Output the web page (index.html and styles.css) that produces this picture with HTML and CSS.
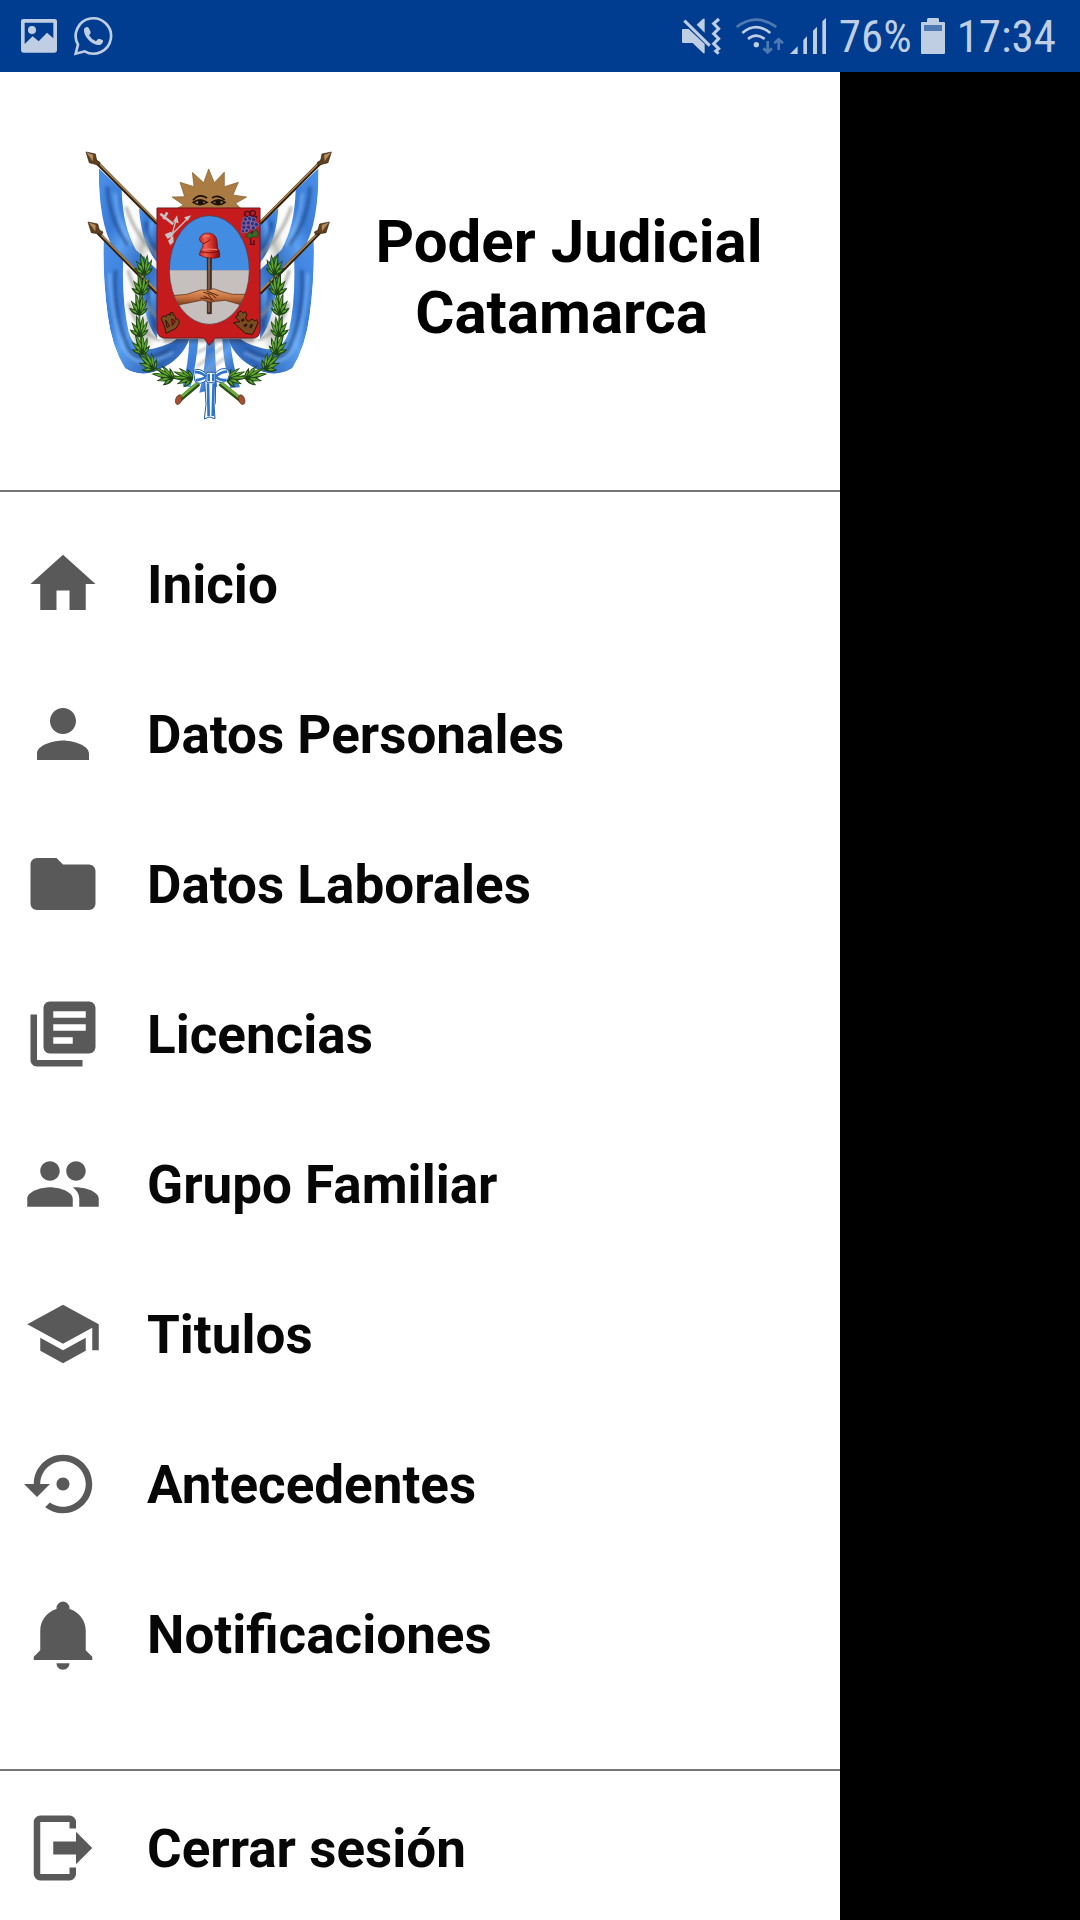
FILE: index.html
```html
<!DOCTYPE html>
<html lang="es">
<head>
<meta charset="utf-8">
<meta name="viewport" content="width=device-width, initial-scale=1">
<title>Poder Judicial Catamarca</title>
<link rel="stylesheet" href="styles.css">
</head>
<body>
<div class="status">
  <div class="status-group status-left">
    <svg width="38" height="40" viewBox="60 48 114 120" aria-hidden="true"><path fill-rule="evenodd" d="M70 57H164Q171 57 171 64V151Q171 158 164 158H70Q63 158 63 151V64Q63 57 70 57ZM74 68V132L98 109L116 124L141 98L160 115V68Z"/><circle cx="96" cy="90" r="12"/></svg>
    <svg width="40" height="40" viewBox="218 48 120 120" aria-hidden="true"><path class="line" stroke-width="8" stroke-linejoin="miter" d="M226 161L233 134A53 53 0 1 1 253 154Z"/><path d="M251 86Q258 78 265 83L271 96Q272 101 266 106Q274 119 287 124L293 117Q297 115 308 121Q309 130 301 134Q287 139 267 122Q249 104 251 86Z"/></svg>
  </div>
  <div class="status-group">
    <svg width="51" height="40" viewBox="60 48 153 120" aria-hidden="true"><path d="M69 87H86L134 132V160H130L98 129H69Q66 129 66 126V90Q66 87 69 87ZM110 74L129 56H134V98Z"/><path class="gap" d="M80 53L158 129" stroke-width="6"/><path class="line" stroke-width="9" d="M73 62L149 137"/><path class="line" stroke-width="9" d="M177 57L161 71L176 86L161 101L176 116L161 131L176 146L167 153L176 161"/></svg>
    <svg width="50" height="40" viewBox="225 48 150 120" aria-hidden="true"><g class="line" stroke-width="8"><path class="dim" d="M230 81Q288 37 349 81"/><path d="M247 99Q288 64 331 99"/><path d="M264 117Q288 97 314 117"/></g><circle cx="289" cy="134" r="8"/><g class="line dim" stroke-width="8"><path d="M323 123V156M310 145L323 157L336 145M356 150V118M343 130L356 118L369 130"/></g></svg>
    <svg width="46" height="40" viewBox="387 48 138 120" aria-hidden="true"><path d="M390 162L413 139V162ZM430 162V120L441 109V162ZM459 162V92L471 80V162ZM487 162V64L498 54V162Z"/></svg>
    <span>76%</span>
    <svg width="37" height="40" viewBox="768 48 111 120" aria-hidden="true"><path d="M783 69Q783 66 786 66H801V57L804 54H834L837 57V66H852Q855 66 855 69V159Q855 162 852 162H786Q783 162 783 159Z"/><path class="level" d="M792 75H846V93H792Z"/></svg>
    <span>17:34</span>
  </div>
</div>
<div class="screen">
  <aside class="drawer">
    <header class="brand">
      <svg class="crest" viewBox="0 0 840 870" role="img" aria-label="Escudo de Catamarca">
        <defs>
          <linearGradient id="cloth" x1="0" y1="0" x2="1" y2="1" spreadMethod="reflect"><stop offset="0" stop-color="#4b91ea"/><stop offset=".35" stop-color="#3a7cd8"/><stop offset=".5" stop-color="#5a9ff0"/><stop offset=".8" stop-color="#2c62b4"/><stop offset="1" stop-color="#4a8ce2"/></linearGradient>
          <linearGradient id="linen" x1="0" y1="0" x2="1" y2="1"><stop offset="0" stop-color="#fff"/><stop offset=".45" stop-color="#fafafa"/><stop offset=".6" stop-color="#c4c4c0"/><stop offset=".75" stop-color="#fff"/><stop offset="1" stop-color="#e2e2e2"/></linearGradient>
          <linearGradient id="hat" x1="0" y1="0" x2="1" y2="0"><stop offset="0" stop-color="#c52622"/><stop offset=".3" stop-color="#f05a48"/><stop offset=".7" stop-color="#c3211e"/><stop offset="1" stop-color="#6d0e10"/></linearGradient>
          <linearGradient id="skin" x1="0" y1="0" x2="0" y2="1"><stop offset="0" stop-color="#e69d68"/><stop offset=".5" stop-color="#c97540"/><stop offset="1" stop-color="#7d3c1c"/></linearGradient>
          <filter id="soft" x="-20%" y="-20%" width="140%" height="140%"><feGaussianBlur stdDeviation="5"/></filter>
          <clipPath id="oval"><ellipse cx="418" cy="390" rx="120" ry="163"/></clipPath>
          <clipPath id="flagShape"><path d="M86 84L262 250V597H358Q335 660 265 690Q215 715 165 685Q125 620 113 525Q96 400 101 297Q86 190 86 84Z"/></clipPath>
          <g id="sprig">
            <path fill="#1d4414" d="M-3 31Q-22 26-29 8L-15 12L-24-14L-10-3L-10-36Q0-24 2-8L11-32Q16-16 13-2L25-18Q25 0 16 12L28 8Q20 28 4 32Z"/>
            <path fill="#5fa52f" d="M-5 25Q-17 22-23 12L-9 17ZM-3 20Q-16 8-20-8L-5 6ZM0 15Q-9-10-7-27Q0-16 2 1ZM4 17Q4-10 11-25Q13-10 10 5ZM6 22Q10 2 22-12Q21 4 12 16ZM6 28Q12 16 22 13Q17 25 6 28Z"/>
          </g>
          <g id="flags">
            <path fill="#fff" d="M86 84L262 250V597H358Q335 660 265 690Q215 715 165 685Q125 620 113 525Q96 400 101 297Q86 190 86 84Z"/>
            <g clip-path="url(#flagShape)">
              <path fill="url(#linen)" d="M155 150L207 205Q213 280 262 352V420L210 388Q166 300 155 150Z"/>
              <path fill="url(#cloth)" d="M86 84L155 150Q158 260 198 330L262 390V452L130 325Q86 250 86 84Z"/>
              <path fill="url(#cloth)" d="M207 205L262 252V368Q214 310 207 205Z"/>
              <path fill="url(#linen)" d="M160 350L262 452V600H325Q270 650 210 635Q155 560 160 350Z"/>
              <path fill="url(#cloth)" d="M101 297L160 350Q154 480 176 575Q195 640 255 625Q300 613 320 597H358Q345 660 265 690Q215 715 165 685Q125 620 113 525Q98 410 101 297Z"/>
              <path fill="url(#cloth)" d="M209 402L262 458V597Q217 535 209 402Z"/>
              <g fill="none" filter="url(#soft)"><path stroke="#1b4686" opacity=".6" stroke-width="12" d="M112 140Q116 240 176 315M137 390Q126 520 180 635Q205 675 300 630M228 245Q230 300 262 335M233 440Q238 530 262 570"/><path stroke="#8cc4ff" opacity=".6" stroke-width="8" d="M135 160Q140 245 184 315M118 400Q125 550 160 625Q205 700 310 637"/><path stroke="#8c8c86" opacity=".7" stroke-width="9" d="M168 200Q195 285 260 345M174 390Q195 470 262 530M176 490Q205 580 270 600"/></g>
            </g>
            <g fill="none"><path stroke="#2e1f10" stroke-width="11" d="M75 62L262 250M84 278L262 460"/><path stroke="#b08750" stroke-width="5" d="M76 60L262 246M84 275L262 455"/></g>
            <g fill="#60411f" stroke="#302010" stroke-width="2"><path d="M48 36L76 42L80 62L90 67L87 76L76 73L58 68Z"/><path d="M54 246L83 252L88 270L99 276L95 285L83 281L64 278Z"/></g><path fill="#b48b5b" d="M49 37L70 45L68 64ZM55 247L77 255L76 274Z"/>
          </g>
        </defs>
        <path fill="#fff" d="M358 597H480L505 742L450 735L400 765L340 740Z"/>
        <path fill="url(#cloth)" d="M358 597H385Q380 665 362 742L338 738Q355 675 358 597ZM410 600H433L441 740L421 750L388 758Q407 680 410 600ZM457 597H480Q488 680 510 742L481 744Q460 670 457 597Z"/>
        <path fill="none" stroke="#8d8d87" stroke-width="7" opacity=".6" filter="url(#soft)" d="M380 680L460 620M400 700L470 650M375 640L440 610"/>
        <use href="#flags"/><use href="#flags" transform="translate(832 0) scale(-1 1)"/>
        <path fill="#aa7b43" stroke="#87592a" stroke-width="2" d="M322 205L340 195L306 171L344 170L330 127L372 140L367 97L401 128L416 87L433 128L463 96L463 140L505 127L489 165L530 171L497 190L512 205Z"/>
        <g fill="none" stroke="#1c120a" stroke-width="5"><path d="M369 181Q386 159 411 174M426 174Q444 162 464 180M370 187Q390 172 411 187Q390 201 370 187ZM425 187Q445 172 465 187Q445 201 425 187Z"/></g><circle cx="392" cy="187" r="8" fill="#1c120a"/><circle cx="444" cy="187" r="8" fill="#1c120a"/>
        <path fill="#313131" opacity=".45" filter="url(#soft)" d="M266 580H565L550 607H283Z"/>
        <path fill="#c51b1d" stroke="#6f191c" stroke-width="3" d="M261 204H570V570Q570 594 547 594H435L418 616L402 594H284Q262 592 261 570Z"/>
        <g clip-path="url(#oval)"><path fill="#428ce2" d="M290 220H550V392H290Z"/><path fill="#c5bfbd" d="M290 391H550V560H290Z"/><path fill="#4b3024" stroke="#1e120e" stroke-width="2" d="M412 340H424V521H412Z"/><path fill="#947060" d="M415 350H419V517H415Z"/>
          <path fill="url(#skin)" stroke="#53250f" stroke-width="2" d="M295 468L350 463L391 450L416 450L431 446L456 455L488 463H545V491L512 494L466 481L437 484L418 487L397 480L355 489L318 496L295 494Z"/><path fill="none" stroke="#53250f" stroke-width="3" d="M400 457L425 463L439 475M410 453L445 467M401 468L426 480M414 463L430 483M391 474L413 476"/></g>
        <ellipse cx="418" cy="390" rx="120" ry="163" fill="none" stroke="#493943" stroke-width="2"/>
        <path fill="url(#hat)" stroke="#5f1112" stroke-width="2" d="M388 345Q390 329 398 321L399 311Q388 305 388 296Q394 279 415 279Q438 281 441 302L443 325Q450 331 449 351Q420 361 388 345Z"/><path fill="none" stroke="#ee7768" stroke-width="4" d="M398 292Q407 286 419 289M397 329Q420 326 442 329"/><path fill="none" stroke="#771412" stroke-width="3" d="M399 311Q412 308 420 298M391 335Q419 342 447 335"/>
        <g fill="none" stroke="#c6c2c4" stroke-width="8"><path d="M271 221L310 253M280 237L292 217"/><path stroke-width="4" d="M299 290L355 233M302 300L318 240"/></g><g fill="#c6c2c4"><path d="M321 226L326 250L309 245ZM364 226L352 243L342 232ZM284 283L303 275L311 284L293 297ZM294 302L310 288L311 306L301 316Z"/></g>
        <g fill="none" stroke="#480e1c" stroke-width="4"><circle cx="532" cy="222" r="8"/><circle cx="548" cy="220" r="8"/><path d="M520 233L559 230L542 292V313H552V300"/></g>
        <g fill="#343078" stroke="#9084c7" stroke-width="2"><circle cx="526" cy="238" r="7"/><circle cx="539" cy="236" r="7"/><circle cx="551" cy="239" r="7"/><circle cx="522" cy="250" r="7"/><circle cx="535" cy="249" r="7"/><circle cx="548" cy="251" r="7"/><circle cx="559" cy="254" r="7"/><circle cx="522" cy="262" r="7"/><circle cx="535" cy="262" r="7"/><circle cx="550" cy="264" r="7"/><circle cx="519" cy="273" r="6"/><circle cx="530" cy="272" r="6"/></g><path fill="#36692c" stroke="#173914" stroke-width="2" d="M527 288L539 276L546 282L558 267L565 279L562 292L548 290L539 296Z"/>
        <g fill="#7a4a20" stroke="#2b160a" stroke-width="3"><path fill-rule="evenodd" d="M284 560L274 536Q277 524 289 530Q291 519 302 526L300 519L308 517L310 526Q320 528 316 537Q330 535 327 550L318 565L288 580ZM287 540L291 562L299 558ZM305 537L307 556L316 544Z"/><path d="M496 531L506 526L503 518L513 513L520 520L526 514L531 525L526 534L534 545L546 537L554 543L560 539L564 549L548 583L526 580L491 548L510 545Z"/><path d="M514 543L522 538M522 559L531 553M541 564L546 553" stroke-width="7"/></g>
        <g fill="none" stroke="#397020" stroke-width="5"><path id="vine" d="M222 350Q211 405 209 495Q203 605 233 665Q265 704 350 714"/><use href="#vine" transform="translate(836 0) scale(-1 1)"/></g>
        <g id="laurel"><use href="#sprig" transform="translate(221 375)"/><use href="#sprig" transform="translate(213 435)"/><use href="#sprig" transform="translate(206 495)"/><use href="#sprig" transform="translate(208 560)"/><use href="#sprig" transform="translate(211 614) rotate(-12)"/><use href="#sprig" transform="translate(233 666) rotate(-35)"/><use href="#sprig" transform="translate(281 706) rotate(-68)"/><use href="#sprig" transform="translate(338 712) rotate(-78)"/></g><use href="#laurel" transform="translate(836 0) scale(-1 1)"/>
        <g fill="none" stroke-width="15"><path stroke="#254f17" d="M325 782L386 730M516 782L450 730"/><path stroke="#71ae3c" stroke-width="8" d="M325 778L386 726M516 778L450 726"/></g><g fill="#a54e31" stroke="#57301a" stroke-width="2"><ellipse cx="326" cy="779" rx="9" ry="15" transform="rotate(20 326 779)"/><ellipse cx="515" cy="779" rx="9" ry="15" transform="rotate(-20 515 779)"/></g>
        <g fill="#f8fcff" stroke="#245eac" stroke-width="3"><path d="M404 720H437L436 790L432 796L435 836L418 831L403 837L408 793Z"/><path d="M409 701Q387 681 370 692L375 724Q390 738 411 719ZM434 701Q455 678 475 689Q483 702 473 719Q455 735 434 720Z"/><rect x="408" y="697" width="29" height="31" rx="7"/></g><path fill="none" stroke="#2d74cc" stroke-width="8" d="M374 697Q390 694 409 710M377 721Q390 720 407 712M472 695Q457 694 437 709M470 719Q455 723 439 713M414 730L416 829M431 730L428 828M416 701V724M430 701V724"/>
      </svg>
      <h1 class="title">Poder Judicial<br>Catamarca&nbsp;</h1>
    </header>
    <nav class="menu">
      <a class="item" href="#inicio"><svg class="icon" viewBox="0 0 24 24"><path d="M10 20v-6h4v6h5v-8h3L12 3 2 12h3v8z"/></svg><span class="label">Inicio</span></a>
      <a class="item" href="#personales"><svg class="icon" viewBox="0 0 24 24"><path d="M12 12c2.210 0 4-1.790 4-4s-1.790-4-4-4-4 1.790-4 4 1.790 4 4 4zm0 2c-2.670 0-8 1.340-8 4v2h16v-2c0-2.660-5.330-4-8-4z"/></svg><span class="label">Datos Personales</span></a>
      <a class="item" href="#laborales"><svg class="icon" viewBox="0 0 24 24"><path d="M10 4H4c-1.100 0-1.990.900-1.990 2L2 18c0 1.100.900 2 2 2h16c1.100 0 2-.900 2-2V8c0-1.100-.900-2-2-2h-8l-2-2z"/></svg><span class="label">Datos Laborales</span></a>
      <a class="item" href="#licencias"><svg class="icon" viewBox="0 0 24 24"><path d="M4 6H2v14c0 1.100.900 2 2 2h14v-2H4V6zm16-4H8c-1.100 0-2 .900-2 2v12c0 1.100.900 2 2 2h12c1.100 0 2-.900 2-2V4c0-1.100-.900-2-2-2zm-1 9H9V9h10v2zm-4 4H9v-2h6v2zm4-8H9V5h10v2z"/></svg><span class="label">Licencias</span></a>
      <a class="item" href="#familia"><svg class="icon" viewBox="0 0 24 24"><path d="M16 11c1.660 0 2.990-1.340 2.990-3S17.660 5 16 5s-3 1.340-3 3 1.340 3 3 3zm-8 0c1.660 0 2.990-1.340 2.990-3S9.660 5 8 5 5 6.340 5 8s1.340 3 3 3zm0 2c-2.330 0-7 1.170-7 3.500V19h14v-2.500C15 14.170 10.330 13 8 13zm8 0c-.290 0-.620.020-.970.050C16.190 13.890 17 15.020 17 16.500V19h6v-2.500c0-2.330-4.670-3.500-7-3.500z"/></svg><span class="label">Grupo Familiar</span></a>
      <a class="item" href="#titulos"><svg class="icon" viewBox="0 0 24 24"><path d="M5 13.180v4L12 21l7-3.820v-4L12 17l-7-3.820zM12 3L1 9l11 6 9-4.910V17h2V9L12 3z"/></svg><span class="label">Titulos</span></a>
      <a class="item" href="#antecedentes"><svg class="icon" viewBox="0 0 24 24"><path d="M14 12c0-1.100-.900-2-2-2s-2 .900-2 2 .900 2 2 2 2-.900 2-2zm-2-9c-4.970 0-9 4.030-9 9H0l4 4 4-4H5c0-3.870 3.130-7 7-7s7 3.130 7 7-3.130 7-7 7c-1.510 0-2.910-.490-4.060-1.300l-1.420 1.440C8.040 20.300 9.940 21 12 21c4.970 0 9-4.030 9-9s-4.030-9-9-9z"/></svg><span class="label">Antecedentes</span></a>
      <a class="item" href="#notificaciones"><svg class="icon" viewBox="0 0 24 24"><path d="M10 21h4c0 1.100-.900 2-2 2s-2-.900-2-2zM21 19v1H3v-1l2-2v-6c0-3.100 2.030-5.830 5-6.710V4a2 2 0 0 1 4 0v.290c2.970.880 5 3.610 5 6.710v6l2 2z"/></svg><span class="label">Notificaciones</span></a>
    </nav>
    <div class="session">
      <button class="item" type="button"><svg class="icon" viewBox="0 0 24 24"><path d="M5 2h9a2 2 0 0 1 2 2v2h-2V4H5v16h9v-2h2v2a2 2 0 0 1-2 2H5a2 2 0 0 1-2-2V4a2 2 0 0 1 2-2zM9 10h7V7l5 5-5 5v-3H9z"/></svg><span class="label">Cerrar sesión</span></button>
    </div>
  </aside>
</div>
</body>
</html>
```
FILE: styles.css
```css
* {
  box-sizing: border-box;
}

body {
  margin: 0;
  min-height: 100vh;
  display: flex;
  flex-direction: column;
  background: #000;
  font-family: Roboto, "Noto Sans", sans-serif;
}

.status {
  display: flex;
  justify-content: space-between;
  align-items: center;
  height: 72px;
  padding: 0 24px 0 20px;
  background: #003c8f;
  color: #bfcee3;
  font-family: "Roboto Condensed", "Liberation Sans Narrow", Roboto, sans-serif;
  font-size: 45px;
  line-height: 70px;
}

.status-group {
  display: flex;
  align-items: center;
  gap: 4px;
}

.status-group span {
  padding-top: 2px;
}

.status-left {
  gap: 15px;
}

.status svg {
  flex: none;
  fill: #bfcee3;
}

.status .line {
  fill: none;
  stroke: #bfcee3;
}

.status .gap {
  fill: none;
  stroke: #003c8f;
}

.status .dim {
  fill: none;
  stroke: #4e79b2;
}

.status .level {
  fill: #4e79b2;
}

.screen {
  flex: 1;
  display: grid;
  grid-template-columns: 7fr 2fr;
}

.drawer {
  display: flex;
  flex-direction: column;
  background: #fff;
}

.brand {
  display: flex;
  align-items: center;
  padding: 68px 52px 60px 70px;
  border-bottom: 2px solid #757575;
}

.crest {
  flex: none;
  width: 280px;
  height: 290px;
}

.title {
  flex: 1;
  margin: 0;
  padding-bottom: 16px;
  color: #000;
  font-size: 60px;
  font-weight: 700;
  line-height: 71px;
  text-align: center;
}

.menu {
  padding: 17px 0 60px;
}

.item {
  display: flex;
  align-items: center;
  gap: 45px;
  width: 100%;
  height: 150px;
  padding: 0 24px;
  border: 0;
  background: none;
  color: #070707;
  font-family: inherit;
  font-size: 53px;
  font-weight: 700;
  text-align: left;
  text-decoration: none;
  cursor: pointer;
}

.label {
  padding-top: 2px;
}

.icon {
  flex: none;
  width: 78px;
  height: 78px;
  fill: #595959;
}

.session {
  flex: 1;
  display: flex;
  padding-top: 4px;
  border-top: 2px solid #757575;
}

.session .item {
  height: auto;
}
```
